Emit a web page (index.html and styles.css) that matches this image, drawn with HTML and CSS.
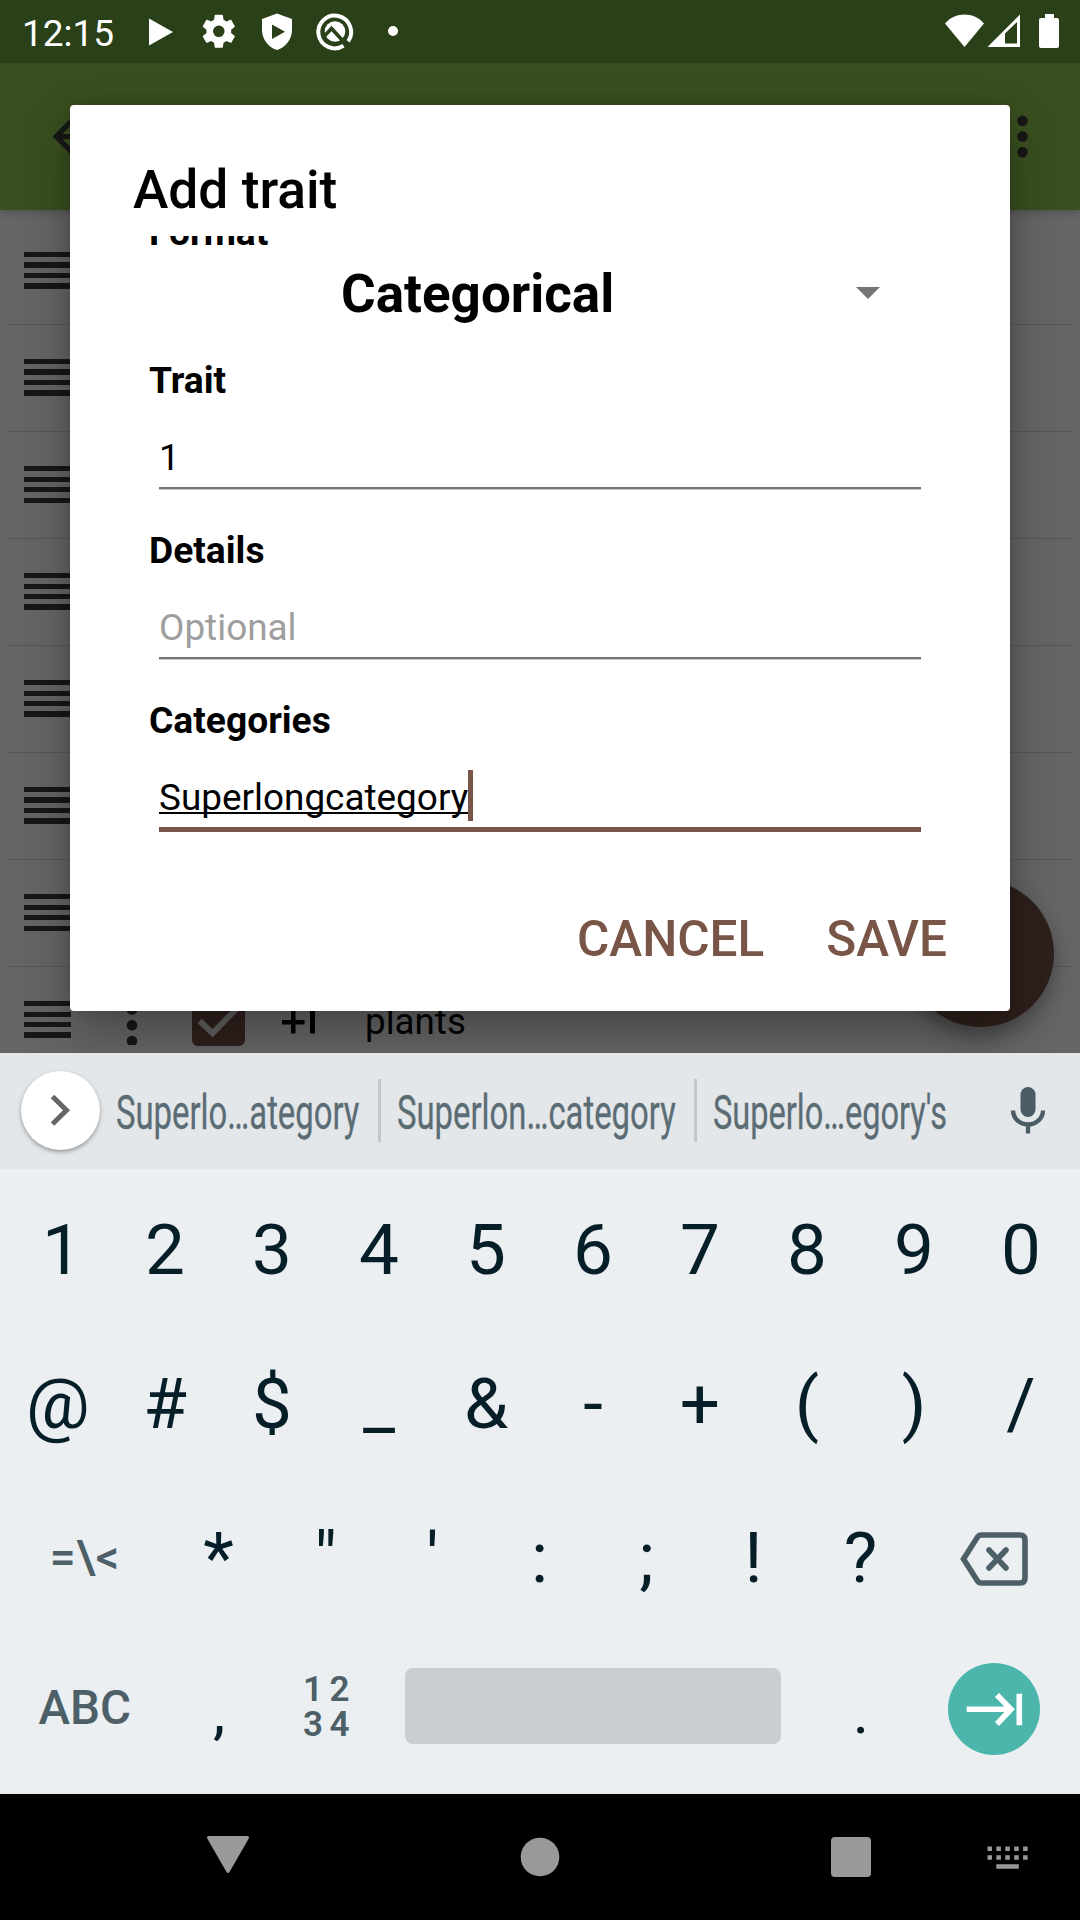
FILE: index.html
```html
<!DOCTYPE html>
<html lang="en">
<head>
<meta charset="utf-8">
<title>Add trait</title>
<link rel="stylesheet" href="styles.css">
</head>
<body>
<div class="screen">
  <header class="status">
    <span class="clock">12:15</span>
    <svg class="status-left" width="260" height="63" viewBox="0 0 260 63">
      <path d="M9 18.500L33 32 9 45.500Z" fill="#fff"/>
      <path transform="translate(59 11.500) scale(1.650)" fill="#fff" d="M19.430 12.980c.04-.32.07-.64.07-.98s-.03-.66-.07-.98l2.110-1.650c.19-.15.24-.42.12-.64l-2-3.460c-.12-.22-.39-.3-.61-.22l-2.490 1c-.52-.4-1.080-.73-1.690-.98l-.38-2.650C14.460 2.180 14.250 2 14 2h-4c-.25 0-.46.18-.49.42l-.38 2.650c-.61.25-1.170.59-1.690.98l-2.490-1c-.23-.09-.49 0-.61.22l-2 3.460c-.13.22-.07.49.12.64l2.110 1.650c-.04.32-.07.65-.07.98s.03.66.07.98l-2.110 1.650c-.19.15-.24.42-.12.64l2 3.460c.12.22.39.3.61.22l2.490-1c.52.4 1.080.73 1.690.98l.38 2.650c.03.24.24.42.49.42h4c.25 0 .46-.18.49-.42l.38-2.650c.61-.25 1.170-.59 1.690-.98l2.490 1c.23.09.49 0 .61-.22l2-3.460c.12-.22.07-.49-.12-.64zM12 15.500A3.500 3.500 0 1 1 12 8.500a3.500 3.500 0 0 1 0 7z"/>
      <path fill="#fff" fill-rule="evenodd" d="M137 13.500L152 19V30C152 39 146 47 137 50C128 47 122 39 122 30V19ZM132 24.500V39L145 31.800Z"/>
      <g transform="translate(1.500 0)">
        <path d="M202 45.800A16.400 16.400 0 1 1 206.700 41.300" fill="none" stroke="#fff" stroke-width="4"/>
        <circle cx="193.500" cy="31.500" r="10.300" fill="#fff"/>
        <path d="M182.500 36.500l7.500-8 17 18.500" fill="none" stroke="#2a4018" stroke-width="3.600"/>
      </g>
      <circle cx="253" cy="31" r="5" fill="#fff"/>
    </svg>
    <svg class="status-right" width="120" height="63" viewBox="0 0 120 63" fill="#fff">
      <path d="M5 23.500C15 11.500 34 11.500 44 23.500L24.500 47Z"/>
      <path fill-rule="evenodd" d="M47.500 47L80 14.500V47ZM65 33.500V43.500H77V22Z"/>
      <path d="M101 18h4v-4h9v4h3q2 0 2 2v26q0 2-2 2h-16q-2 0-2-2v-26q0-2 2-2z"/>
    </svg>
  </header>

  <div class="appbar">
    <svg class="icon" viewBox="0 0 24 24"><path d="M20 11H7.830l5.590-5.590L12 4l-8 8 8 8 1.410-1.410L7.830 13H20z"/></svg>
    <svg class="icon" viewBox="0 0 24 24"><circle cx="12" cy="6" r="2"/><circle cx="12" cy="12" r="2"/><circle cx="12" cy="18" r="2"/></svg>
  </div>

  <main class="list">
    <div class="row"><i class="grip"></i></div>
    <div class="row"><i class="grip"></i></div>
    <div class="row"><i class="grip"></i></div>
    <div class="row"><i class="grip"></i></div>
    <div class="row"><i class="grip"></i></div>
    <div class="row"><i class="grip"></i></div>
    <div class="row"><i class="grip"></i></div>
    <div class="row last">
      <i class="grip"></i>
      <svg class="more" width="12" height="45" viewBox="0 0 12 45"><g fill="#171717"><circle cx="6" cy="9.500" r="5.300"/><circle cx="6" cy="25.300" r="5.300"/><circle cx="6" cy="41" r="5.300"/></g></svg>
      <svg class="check" width="53" height="53" viewBox="0 0 18 18"><rect width="18" height="18" rx="2" fill="#2e201c"/><path d="M2.600 9.500L7 13.600 15.500 5" fill="none" stroke="#606060" stroke-width="2"/></svg>
      <svg class="plus" width="36" height="44" viewBox="0 0 36 44"><path d="M9 11h4.500v9h9v4.500h-9v9h-4.500v-9H0v-4.500h9zM28 33.500V4l-5.500 2.500V2.500l9-3.500h1.500v34.500z"/></svg>
      <span class="trait-name">plants</span>
    </div>
  </main>
  <div class="fab"></div>

  <section class="dialog">
    <h1 class="title">Add trait</h1>
    <div class="form">
      <div class="label format">Format</div>
      <div class="spinner"><span>Categorical</span><i class="caret"></i></div>
      <div class="field"><div class="label">Trait</div><div class="input">1</div></div>
      <div class="field"><div class="label">Details</div><div class="input hint">Optional</div></div>
      <div class="field"><div class="label">Categories</div><div class="input focused"><span class="typed">Superlongcategory</span><i class="cursor"></i></div></div>
    </div>
    <div class="actions"><span>CANCEL</span><span>SAVE</span></div>
  </section>

  <section class="keyboard">
    <div class="suggest">
      <div class="expand"><svg width="79" height="79" viewBox="0 0 79 79"><path d="M31.500 25.500L45.500 39.300 31.500 53" fill="none" stroke="#666" stroke-width="5"/></svg></div>
      <div class="word first"><span>Superlo…ategory</span></div>
      <div class="word second"><span>Superlon…category</span></div>
      <div class="word third"><span>Superlo…egory's</span></div>
      <svg class="mic" width="34" height="48" viewBox="0 0 34 48"><rect x="9.500" y="1" width="15" height="30" rx="7.500" fill="#4a5c64"/><path d="M2 24.500a15 14 0 0 0 30 0M17 38v9.500" fill="none" stroke="#4a5c64" stroke-width="4.300"/></svg>
    </div>
    <div class="keys">
      <div class="krow digits"><b>1</b><b>2</b><b>3</b><b>4</b><b>5</b><b>6</b><b>7</b><b>8</b><b>9</b><b>0</b></div>
      <div class="krow"><b>@</b><b>#</b><b>$</b><b>_</b><b>&amp;</b><b>-</b><b>+</b><b>(</b><b>)</b><b>/</b></div>
      <div class="krow"><b class="wide sym">=\&lt;</b><b>*</b><b>"</b><b>'</b><b>:</b><b>;</b><b>!</b><b>?</b>
        <div class="wide"><svg width="68" height="54" viewBox="0 0 68 54" fill="none" stroke="#4d5f67" stroke-width="5.600"><path d="M21 3h39q5 0 5 5v38q0 5-5 5H21q-2 0-3.500-2L3.500 27 17.500 5q1.500-2 3.500-2z"/><path d="M29 18l17 18m0-18l-17 18" stroke-linecap="round"/></svg></div></div>
      <div class="krow bottom"><b class="wide abc">ABC</b><b class="small">,</b>
        <div class="numpad"><span>1</span><span>2</span><span>3</span><span>4</span></div>
        <div class="space"><i></i></div><b class="small">.</b>
        <div class="wide enter"><svg width="92" height="92" viewBox="0 0 92 92"><circle cx="46" cy="46" r="46" fill="#4db6ac"/><path d="M18.700 46.300H61M49 32l14 14.300L49 61M71.300 30.700v31.500" fill="none" stroke="#fff" stroke-width="5.600"/></svg></div></div>
    </div>
  </section>

  <nav class="nav">
    <svg width="1080" height="126" viewBox="0 0 1080 126" fill="#999">
      <path d="M209 42h38q3 0 1.500 3L229.500 78q-1.500 2-3 0L207.500 45q-1.500-3 1.500-3z"/>
      <circle cx="540" cy="63" r="19.300"/>
      <rect x="831" y="43" width="40" height="40" rx="4"/>
      <path d="M987.500 52.500h4.500v4.500h-4.500zm8.900 0h4.500v4.500h-4.500zm8.900 0h4.500v4.500h-4.500zm8.900 0h4.500v4.500h-4.500zm8.900 0h4.500v4.500h-4.500zM987.500 61.300h4.500v4.500h-4.500zm8.900 0h4.500v4.500h-4.500zm8.900 0h4.500v4.500h-4.500zm8.900 0h4.500v4.500h-4.500zm8.900 0h4.500v4.500h-4.500zM996.300 70.300h22.500v4.500h-22.500z"/>
    </svg>
  </nav>
</div>
</body>
</html>
```
FILE: styles.css
```css
* { box-sizing: border-box; }
body { margin: 0; font-family: Roboto, "Liberation Sans", sans-serif; color: #000; }
svg { display: block; flex: none; }
.screen { position: relative; width: 1080px; height: 1920px; overflow: hidden; display: flex; flex-direction: column; background: #656565; }

.status { flex: none; height: 63px; display: flex; align-items: center; background: #2a4018; color: #fff; padding: 0 20px 0 22px; }
.clock { width: 118px; font-size: 37px; line-height: 63px; padding-top: 3px; }
.status-right { margin-left: auto; }

.appbar { flex: none; height: 147px; display: flex; justify-content: space-between; align-items: center; padding: 0 26px 0 42px; background: #394f1f; box-shadow: 0 2px 8px rgba(0,0,0,.2); z-index: 1; }
.icon { width: 63px; height: 63px; fill: #171717; }

.list { flex: none; height: 843px; padding: 8px 8px 0; overflow: hidden; }
.row { height: 107px; border-bottom: 1px solid #565656; padding: 0 0 2px 16px; display: flex; align-items: center; }
.grip { flex: none; width: 47px; height: 37px; background: repeating-linear-gradient(#171717 0 5.300px, transparent 5.300px 10.500px); }
.last { height: 78px; border: 0; align-items: flex-start; padding-top: 34px; }
.more { margin: -1px 0 0 54.500px; }
.check { margin: -8px 0 0 54px; }
.plus { margin: -1px 0 0 37px; overflow: visible; }
.trait-name { font-size: 36.750px; line-height: 44px; margin: -1px 0 0 47.500px; }
.fab { position: absolute; left: 907px; top: 880px; width: 147px; height: 147px; border-radius: 50%; background: #2e201c; box-shadow: 0 10px 20px rgba(0,0,0,.3); }

.dialog { position: absolute; left: 70px; top: 105px; width: 940px; height: 906px; border-radius: 4px; background: #fff; box-shadow: 0 20px 50px rgba(0,0,0,.3), 0 0 14px rgba(0,0,0,.12); z-index: 2; }
.title { margin: 0; padding: 53px 0 0 63px; height: 131px; font-size: 53.300px; line-height: 64px; font-weight: 500; }
.form { height: 620px; padding: 0 80px 0 79px; overflow: hidden; }
.label { font-weight: 700; font-size: 37.200px; line-height: 44px; }
.format { margin-top: -26px; }
.spinner { height: 75px; display: flex; align-items: center; padding: 4px 50px 0 192px; justify-content: space-between; font-size: 53px; font-weight: 700; }
.caret { border: 12.800px solid transparent; border-top-color: #757575; border-bottom: 0; margin-top: -2px; }
.field { height: 170px; padding-top: 29px; }
.input { margin: 27px 9px 0 10px; height: 60px; font-size: 36.900px; line-height: 44px; padding-top: 7px; border-bottom: 2px solid #757575; box-shadow: 0 1px 0 #c8c8c8; display: flex; }
.hint { color: #9e9e9e; }
.focused { border-bottom: 5px solid #795548; height: 63px; box-shadow: none; }
.typed { height: 44px; text-decoration: underline; text-decoration-thickness: 2px; text-underline-offset: 2px; text-decoration-skip-ink: none; }
.cursor { width: 5px; height: 51px; margin-top: -6px; background: #795548; }
.actions { display: flex; justify-content: flex-end; gap: 62px; padding: 53px 63px 0 0; font-size: 49.500px; line-height: 60px; font-weight: 500; color: #795548; }

.keyboard { flex: none; height: 741px; background: #ebeff2; z-index: 3; }
.suggest { height: 116px; display: flex; background: #e3e7ea; }
.expand { flex: none; width: 79px; height: 79px; margin: 18px 0 0 21px; border-radius: 50%; background: #fff; box-shadow: 0 2px 4px rgba(0,0,0,.35); }
.word { flex: none; height: 63px; margin-top: 26px; padding-left: 16px; font-size: 47.250px; line-height: 69px; color: #5b6c74; white-space: nowrap; }
.word span { display: block; width: 0; transform: scaleX(.695); transform-origin: 0 0; -webkit-text-stroke: .3px #5b6c74; }
.first { width: 281px; border-right: 3px solid #c3c7ca; }
.second { width: 316px; border-right: 3px solid #c3c7ca; }
.third { width: 314px; }
.third span { transform: scaleX(.688); }
.mic { margin-top: 33px; }
.keys { padding: 4px 5px 0 4.500px; }
.krow { height: 154px; display: flex; align-items: center; font-size: 71px; color: #061e28; }
.krow b { flex: none; width: 107px; text-align: center; font-weight: 400; line-height: 154px; }
.krow .wide { flex: none; width: 160.500px; display: flex; justify-content: center; }
.krow div.wide { padding-top: 2px; }
.krow .sym { font-size: 46px; font-weight: 500; letter-spacing: .5px; color: #4d5f67; padding-bottom: 2px; }
.digits b:first-child { padding-left: 8px; }
.krow .abc { font-size: 47.500px; font-weight: 500; color: #4d5f67; padding-bottom: 9px; }
.krow .small { font-size: 62px; padding-left: 1px; }
.numpad { width: 107px; display: grid; grid-template-columns: 27px 26px; grid-auto-rows: 35px; justify-content: center; padding: 0 0 10px 1px; font-size: 35px; font-weight: 600; line-height: 35px; text-align: center; color: #4d5f67; }
.space { width: 428px; padding: 0 26px 12px; }
.space i { display: block; height: 76px; border-radius: 8px; background: #c9cdd0; }
.krow .enter { padding: 0 0 9px; }
.nav { flex: none; height: 126px; background: #000; }
```
